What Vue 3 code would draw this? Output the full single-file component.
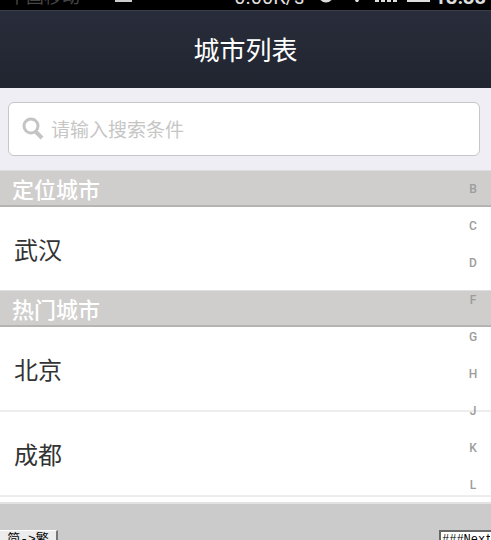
<template>
  <div class="page">
    <div class="status-bar">
      <div class="status-left">
        <span>中国移动</span>
        <i class="status-block"></i>
      </div>
      <div class="status-right">
        <span>0.00K/s</span>
        <svg class="status-icons" viewBox="0 0 130 16" aria-hidden="true">
          <circle cx="22" cy="8" r="6" fill="none" stroke="#ddd" stroke-width="3" />
          <path d="M46 4 L60 4 L54 15 L52 15 Z" fill="#ddd" />
          <path d="M71 11h4v4h-4z M77 8h4v7h-4z M83 5h4v10h-4z M89 1h4v14h-4z" fill="#ddd" />
          <rect x="103" y="4" width="23" height="11" fill="#ddd" />
        </svg>
        <span class="status-time">13:38</span>
      </div>
    </div>

    <header class="title-bar">
      <h1>城市列表</h1>
    </header>

    <div class="search-wrap">
      <label class="search-box">
        <svg class="search-icon" viewBox="0 0 22 24" aria-hidden="true">
          <circle cx="9" cy="9" r="7" fill="none" stroke="#c4c4c4" stroke-width="3" />
          <path d="M14 15 L20 21" stroke="#c4c4c4" stroke-width="4" />
        </svg>
        <input v-model="keyword" type="text" placeholder="请输入搜索条件" aria-label="请输入搜索条件" />
      </label>
    </div>

    <main class="city-list">
      <section v-for="group in groups" :key="group.title">
        <h2>{{ group.title }}</h2>
        <ul>
          <li v-for="city in group.cities" :key="city">{{ city }}</li>
        </ul>
      </section>

      <nav class="letters">
        <a v-for="letter in letters" :key="letter" :href="`#${letter}`">{{ letter }}</a>
      </nav>
    </main>

    <footer class="toolbar">
      <button type="button" class="convert">简-&gt;繁</button>
      <input v-model="note" type="text" class="note" aria-label="Next" />
    </footer>
  </div>
</template>

<script setup>
import { ref } from 'vue'

const keyword = ref('')
const note = ref('###Next')

const groups = [
  { title: '定位城市', cities: ['武汉'] },
  { title: '热门城市', cities: ['北京', '成都'] },
]

const letters = ['B', 'C', 'D', 'F', 'G', 'H', 'J', 'K', 'L']
</script>

<style>
body {
  background: #cbcbcb;
}
</style>

<style scoped>
.page {
  display: flex;
  flex-direction: column;
  height: 100vh;
  overflow: hidden;
  font-family: "Noto Sans CJK SC", sans-serif;
}

.status-bar {
  display: flex;
  justify-content: space-between;
  align-items: flex-end;
  flex: none;
  height: 10px;
  padding: 0 5px 3px 8px;
  box-sizing: border-box;
  overflow: hidden;
  background: #000;
  color: #ddd;
  font-family: Roboto, "Noto Sans CJK SC", sans-serif;
  font-size: 20px;
  line-height: 20px;
}

.status-left,
.status-right {
  display: flex;
  align-items: flex-end;
}

.status-left {
  gap: 35px;
  color: #444;
  font-size: 18px;
}

.status-block {
  width: 17px;
  height: 4px;
  margin-bottom: 5px;
  background: #ccc;
}

.status-icons {
  width: 130px;
  height: 16px;
  margin-bottom: 4px;
}

.status-time {
  font-weight: 700;
}

.title-bar {
  flex: none;
  padding: 19px 0 20px;
  border-top: 1px solid #3b3e48;
  background: linear-gradient(#292d3b, #202530);
  text-align: center;
}

.title-bar h1 {
  margin: 0;
  color: #fff;
  font-size: 26px;
  font-weight: 400;
  line-height: 38px;
}

.search-wrap {
  flex: none;
  padding: 14px 11px 14px 8px;
  background: #efeef4;
}

.search-box {
  display: flex;
  align-items: center;
  gap: 7px;
  height: 52px;
  padding: 0 13px;
  border: 1px solid #c6c6c8;
  border-radius: 6px;
  background: #fff;
}

.search-icon {
  flex: none;
  width: 22px;
  height: 24px;
}

.search-box input {
  flex: 1;
  min-width: 0;
  padding: 0;
  border: 0;
  outline: 0;
  background: none;
  color: #333;
  font-family: inherit;
  font-size: 19px;
  line-height: 28px;
}

.search-box input::placeholder {
  color: #c6c6c6;
  opacity: 1;
}

.city-list {
  position: relative;
  flex: none;
  padding-bottom: 5px;
  border-bottom: 2px solid #e2e2e2;
  background: #fff;
}

.city-list h2 {
  margin: 0;
  padding: 0 12px;
  border-top: 1px solid #dedede;
  border-bottom: 2px solid #b5b4b3;
  background: #cfcecc;
  color: #fff;
  font-size: 22px;
  font-weight: 500;
  line-height: 34px;
}

.city-list ul {
  margin: 0;
  padding: 0;
  list-style: none;
}

.city-list li {
  padding: 0 14px;
  border-bottom: 2px solid #ededed;
  color: #333;
  font-size: 24px;
  line-height: 83px;
}

.city-list section:first-child li {
  border-bottom: 0;
}

/* Letter index floats over the rows on the right */
.letters {
  position: absolute;
  top: 1px;
  right: 8px;
  display: flex;
  flex-direction: column;
  width: 20px;
  text-align: center;
}

.letters a {
  color: #9c9c9c;
  font-family: Roboto, sans-serif;
  font-size: 12px;
  font-weight: 500;
  line-height: 37px;
  text-decoration: none;
}

.toolbar {
  display: flex;
  flex: 1;
  justify-content: space-between;
  align-items: flex-start;
  padding-top: 26px;
  background: #cbcbcb;
}

.convert {
  width: 58px;
  height: 20px;
  padding: 0;
  border: 1px solid #fff;
  border-left: 0;
  border-right: 2px solid #777;
  border-radius: 0;
  background: #ececec;
  color: #000;
  font-family: "Liberation Mono", "Noto Sans CJK SC", monospace;
  font-size: 13px;
  line-height: 16px;
}

.note {
  width: 52px;
  height: 20px;
  padding: 0 1px;
  border: 2px solid #666;
  border-right: 0;
  border-radius: 0;
  box-sizing: border-box;
  background: #fff;
  color: #000;
  font-family: "Liberation Mono", monospace;
  font-size: 12px;
  line-height: 16px;
}
</style>
